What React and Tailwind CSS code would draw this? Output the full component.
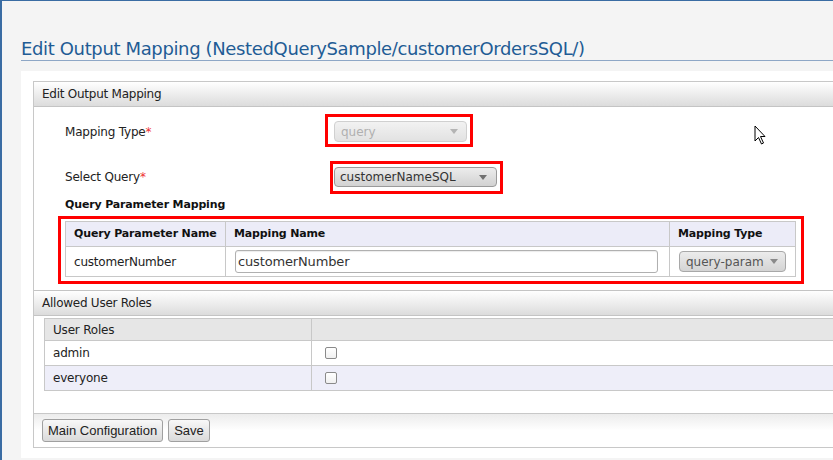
import React from "react";

const dv = { fontFamily: '"DejaVu Sans", Verdana, sans-serif' };
const lib = { fontFamily: '"Liberation Sans", Arial, sans-serif' };

function Arrow({ color }) {
  return (
    <svg width="8" height="5" viewBox="0 0 8 5" className="shrink-0">
      <path d="M0 0 L8 0 L4 5 Z" fill={color} />
    </svg>
  );
}

function RedBox({ className }) {
  return <div className={"pointer-events-none absolute border-[3px] border-[#f00] " + className} />;
}

function Label({ children }) {
  return (
    <div className="w-[269px] text-[12px] tracking-[-0.2px] text-[#222]">
      {children}
      <span className="text-[#e33]">*</span>
    </div>
  );
}

export default function App() {
  return (
    <div
      className="relative h-[460px] w-[833px] overflow-hidden border-l-2 border-t border-[#3a6ca3] bg-[#f4f4f4]"
      style={dv}
    >
      {/* Title */}
      <div className="ml-[19px] flex h-[60px] items-end border-b border-[#8ea7c6]">
        <h1 className="whitespace-nowrap text-[18px] leading-[22px] tracking-[-0.36px] text-[#1f5c95]">
          Edit Output Mapping (NestedQuerySample/customerOrdersSQL/)
        </h1>
      </div>

      {/* White content area */}
      <div className="ml-[19px] mt-[10px] w-[900px] bg-white pb-[10px] pl-[12px] pt-[10px]">
        <div className="w-[840px] border border-[#c8c8c8]">
          {/* Header 1 */}
          <div className="flex h-[25px] items-center border-b border-[#c4c4c4] bg-linear-to-b from-white to-[#dcdcdc] pl-[8px] text-[12px] tracking-[-0.25px] text-[#222]">
            Edit Output Mapping
          </div>

          {/* Body */}
          <div className="pb-[13px] pl-[31px] pt-[14px]">
            <div className="flex h-[21px] items-center">
              <Label>Mapping Type</Label>
              <div className="relative">
                <div className="flex h-[21px] w-[133px] items-center justify-between rounded-[4px] border border-[#d0d0d0] bg-linear-to-b from-[#f2f2f2] to-[#e2e2e2] pl-[6px] pr-[8px] text-[12px] text-[#b0b0b0]">
                  <span>query</span>
                  <Arrow color="#b4b4b4" />
                </div>
                <RedBox className="-left-[9px] -right-[6px] -top-[7px] -bottom-[5px]" />
              </div>
            </div>

            <div className="mt-[25px] flex h-[20px] items-center">
              <Label>Select Query</Label>
              <div className="relative">
                <div className="flex h-[20px] w-[163px] items-center justify-between rounded-[4px] border border-[#9a9a9a] bg-linear-to-b from-[#ececec] to-[#d2d2d2] pl-[5px] pr-[9px] text-[12px] text-[#333]">
                  <span>customerNameSQL</span>
                  <Arrow color="#707070" />
                </div>
                <RedBox className="-left-[4px] -right-[6px] -top-[6px] -bottom-[7px]" />
              </div>
            </div>

            <div className="mt-[10px] h-[16px] text-[11px] font-bold leading-[16px] tracking-[-0.15px] text-[#111]">
              Query Parameter Mapping
            </div>

            <div className="relative mt-[8px] w-[731px]">
              <table className="w-[731px] border-collapse text-[12px] tracking-[-0.2px] text-[#222]">
                <thead>
                  <tr className="h-[25px] bg-[#ececf8]">
                    <th className="w-[160px] border border-[#c8c8c8] pl-[8px] text-left text-[11px] font-bold tracking-[-0.15px] text-[#111]">
                      Query Parameter Name
                    </th>
                    <th className="w-[444px] border border-[#c8c8c8] pl-[8px] text-left text-[11px] font-bold tracking-[-0.15px] text-[#111]">
                      Mapping Name
                    </th>
                    <th className="border border-[#c8c8c8] pl-[8px] text-left text-[11px] font-bold tracking-[-0.15px] text-[#111]">
                      Mapping Type
                    </th>
                  </tr>
                </thead>
                <tbody>
                  <tr className="h-[30px] bg-white">
                    <td className="border border-[#c8c8c8] pl-[8px]">customerNumber</td>
                    <td className="border border-[#c8c8c8] pl-[9px]">
                      <div className="flex h-[23px] w-[423px] items-center rounded-[3px] border border-[#b0b0b0] pl-[2px] text-[13px] tracking-[-0.15px] text-[#333] shadow-[inset_0_1px_1px_rgba(0,0,0,0.08)]">
                        customerNumber
                      </div>
                    </td>
                    <td className="border border-[#c8c8c8] pl-[9px]">
                      <div className="flex h-[21px] w-[107px] items-center justify-between rounded-[4px] border border-[#a8a8a8] bg-linear-to-b from-[#ececec] to-[#d4d4d4] pl-[6px] pr-[7px] text-[12px] tracking-normal text-[#555]">
                        <span>query-param</span>
                        <Arrow color="#8a8a8a" />
                      </div>
                    </td>
                  </tr>
                </tbody>
              </table>
              <RedBox className="-left-[7px] -right-[8px] -top-[5px] -bottom-[7px]" />
            </div>
          </div>

          {/* Header 2 */}
          <div className="flex h-[26px] items-center border-y border-[#c4c4c4] bg-linear-to-b from-white to-[#dcdcdc] pl-[8px] text-[12px] tracking-[-0.25px] text-[#222]">
            Allowed User Roles
          </div>

          <div className="pl-[10px] pt-[2px]">
            <table className="w-[820px] border-collapse text-[12px] tracking-[-0.2px] text-[#222]">
              <thead>
                <tr className="h-[22px] bg-[#e6e6e6]">
                  <th className="w-[267px] border border-[#c8c8c8] pl-[8px] text-left font-normal">User Roles</th>
                  <th className="border border-[#c8c8c8]"></th>
                </tr>
              </thead>
              <tbody>
                <tr className="h-[25px] bg-white">
                  <td className="border border-[#c8c8c8] pl-[8px]">admin</td>
                  <td className="border border-[#c8c8c8] pl-[13px]">
                    <div className="h-[12px] w-[12px] rounded-[2px] border border-[#8a8a8a] bg-linear-to-b from-white to-[#f0f0f0]" />
                  </td>
                </tr>
                <tr className="h-[25px] bg-[#eeeef9]">
                  <td className="border border-[#c8c8c8] pl-[8px]">everyone</td>
                  <td className="border border-[#c8c8c8] pl-[13px]">
                    <div className="h-[12px] w-[12px] rounded-[2px] border border-[#8a8a8a] bg-linear-to-b from-white to-[#f0f0f0]" />
                  </td>
                </tr>
              </tbody>
            </table>
          </div>

          {/* Footer */}
          <div className="mt-[22px] flex h-[34px] items-start gap-[5px] border-t border-[#c8c8c8] bg-linear-to-b from-[#ececec] to-white to-50% pl-[8px] pt-[5px]" style={lib}>
            <button className="h-[23px] rounded-[3px] border border-[#a0a0a0] bg-linear-to-b from-[#f8f8f8] to-[#dadada] px-[5px] text-[13px] text-[#222]">
              Main Configuration
            </button>
            <button className="h-[23px] rounded-[3px] border border-[#a0a0a0] bg-linear-to-b from-[#f8f8f8] to-[#dadada] px-[5px] text-[13px] text-[#222]">
              Save
            </button>
          </div>
        </div>
      </div>

      {/* Mouse cursor */}
      <svg className="absolute left-[752px] top-[124px]" width="13" height="21" viewBox="0 0 13 21">
        <path d="M1 1 L1 16 L4.5 12.5 L7.5 19 L9.5 18 L6.5 11.5 L11 11.5 Z" fill="#fff" stroke="#000" strokeWidth="1" strokeLinejoin="miter" />
      </svg>
    </div>
  );
}
